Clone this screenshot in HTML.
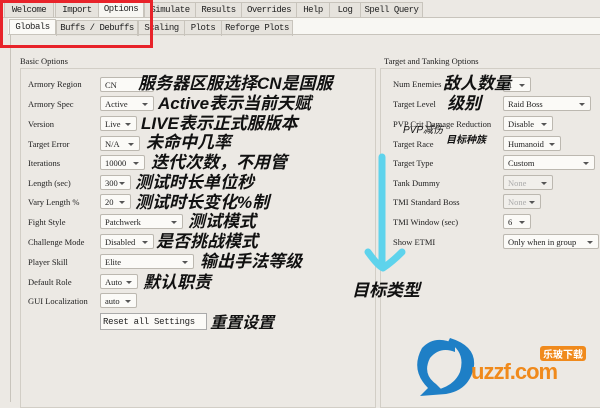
<!DOCTYPE html><html><head><style>
body{margin:0;width:600px;height:402px;background:#ece9e4;position:relative;overflow:hidden;font-family:"Liberation Serif","Noto Serif CJK SC",serif;font-size:9px;color:#222}
.a{position:absolute}
.tab{position:absolute;height:15px;border:1px solid #c8c4bc;border-bottom:none;background:#e6e3dd;font-size:9px;line-height:15px;text-align:center;color:#222;font-family:"Liberation Mono",monospace;letter-spacing:-0.5px}
.lbl{position:absolute;font-size:8.5px;color:#222}
.cb{position:absolute;height:15px;border:1px solid #bcb8b0;background:#fbfaf7;border-radius:2px;font-size:8.5px;line-height:15px;padding-left:4px;box-sizing:border-box;white-space:nowrap}
.cb:after{content:"";position:absolute;right:5px;top:6px;border:3px solid transparent;border-top:3px solid #555}
.dis{color:#aaa;background:#f1efeb}
.cn{position:absolute;font-family:"Liberation Sans","Noto Sans CJK SC",sans-serif;font-weight:bold;font-style:italic;color:#111;font-size:16px;white-space:nowrap;line-height:1}
</style></head><body>
<div class="tab" style="left:4px;top:2px;width:48px">Welcome</div>
<div class="tab" style="left:55px;top:2px;width:42px">Import</div>
<div class="tab" style="left:98px;top:1px;width:44px;background:#f7f6f2;height:16px">Options</div>
<div class="tab" style="left:144px;top:2px;width:50px">Simulate</div>
<div class="tab" style="left:195px;top:2px;width:45px">Results</div>
<div class="tab" style="left:241px;top:2px;width:54px">Overrides</div>
<div class="tab" style="left:296px;top:2px;width:32px">Help</div>
<div class="tab" style="left:329px;top:2px;width:30px">Log</div>
<div class="tab" style="left:360px;top:2px;width:61px">Spell Query</div>
<div class="a" style="left:0;top:17px;width:600px;height:1px;background:#c8c4bc"></div>
<div class="a" style="left:8px;top:18px;width:592px;height:16px;background:#f8f7f3"></div>
<div class="tab" style="left:9px;top:19px;width:45px;background:#fbfaf7">Globals</div>
<div class="tab" style="left:56px;top:20px;width:80px">Buffs / Debuffs</div>
<div class="tab" style="left:138px;top:20px;width:45px">Scaling</div>
<div class="tab" style="left:184px;top:20px;width:36px">Plots</div>
<div class="tab" style="left:221px;top:20px;width:70px">Reforge Plots</div>
<div class="a" style="left:8px;top:34px;width:592px;height:1px;background:#c8c4bc"></div>
<div class="a" style="left:10px;top:35px;width:1px;height:367px;background:#c8c4bc"></div>
<div class="a" style="left:0;top:0;width:147px;height:42px;border:3px solid #e8232a"></div>
<div class="lbl" style="left:20px;top:56px">Basic Options</div>
<div class="lbl" style="left:384px;top:56px">Target and Tanking Options</div>
<div class="a" style="left:20px;top:68px;width:356px;height:340px;border:1px solid #d2cec6;box-sizing:border-box"></div>
<div class="a" style="left:380px;top:68px;width:230px;height:340px;border:1px solid #d2cec6;box-sizing:border-box"></div>

<div class="lbl" style="left:28px;top:79px">Armory Region</div><div class="cb" style="left:100px;top:77px;width:54px">CN</div>
<div class="lbl" style="left:28px;top:99px">Armory Spec</div><div class="cb" style="left:100px;top:96px;width:54px">Active</div>
<div class="lbl" style="left:28px;top:119px">Version</div><div class="cb" style="left:100px;top:116px;width:37px">Live</div>
<div class="lbl" style="left:28px;top:139px">Target Error</div><div class="cb" style="left:100px;top:136px;width:40px">N/A</div>
<div class="lbl" style="left:28px;top:158px">Iterations</div><div class="cb" style="left:100px;top:155px;width:45px">10000</div>
<div class="lbl" style="left:28px;top:178px">Length (sec)</div><div class="cb" style="left:100px;top:175px;width:31px">300</div>
<div class="lbl" style="left:28px;top:197px">Vary Length %</div><div class="cb" style="left:100px;top:194px;width:31px">20</div>
<div class="lbl" style="left:28px;top:217px">Fight Style</div><div class="cb" style="left:100px;top:214px;width:83px">Patchwerk</div>
<div class="lbl" style="left:28px;top:237px">Challenge Mode</div><div class="cb" style="left:100px;top:234px;width:54px">Disabled</div>
<div class="lbl" style="left:28px;top:257px">Player Skill</div><div class="cb" style="left:100px;top:254px;width:94px">Elite</div>
<div class="lbl" style="left:28px;top:277px">Default Role</div><div class="cb" style="left:100px;top:274px;width:38px">Auto</div>
<div class="lbl" style="left:28px;top:296px">GUI Localization</div><div class="cb" style="left:100px;top:293px;width:37px">auto</div>
<div class="a" style="left:100px;top:313px;width:107px;height:17px;border:1px solid #aaa;background:#fbfaf7;font-family:'Liberation Mono',monospace;font-size:9px;line-height:17px;padding-left:2px;box-sizing:border-box;white-space:nowrap;overflow:hidden;letter-spacing:-0.3px">Reset all Settings</div>

<div class="lbl" style="left:393px;top:79px">Num Enemies</div><div class="cb" style="left:503px;top:77px;width:28px">1</div>
<div class="lbl" style="left:393px;top:99px">Target Level</div><div class="cb" style="left:503px;top:96px;width:88px">Raid Boss</div>
<div class="lbl" style="left:393px;top:119px">PVP Crit Damage Reduction</div><div class="cb" style="left:503px;top:116px;width:50px">Disable</div>
<div class="lbl" style="left:393px;top:139px">Target Race</div><div class="cb" style="left:503px;top:136px;width:58px">Humanoid</div>
<div class="lbl" style="left:393px;top:158px">Target Type</div><div class="cb" style="left:503px;top:155px;width:92px">Custom</div>
<div class="lbl" style="left:393px;top:178px">Tank Dummy</div><div class="cb dis" style="left:503px;top:175px;width:50px">None</div>
<div class="lbl" style="left:393px;top:197px">TMI Standard Boss</div><div class="cb dis" style="left:503px;top:194px;width:38px">None</div>
<div class="lbl" style="left:393px;top:217px">TMI Window (sec)</div><div class="cb" style="left:503px;top:214px;width:28px">6</div>
<div class="lbl" style="left:393px;top:237px">Show ETMI</div><div class="cb" style="left:503px;top:234px;width:96px">Only when in group</div>

<div class="cn" style="left:138px;top:75px;font-size:17px">服务器区服选择CN是国服</div>
<div class="cn" style="left:158px;top:95px;font-size:17px">Active表示当前天赋</div>
<div class="cn" style="left:141px;top:115px;font-size:17px">LIVE表示正式服版本</div>
<div class="cn" style="left:146px;top:134px;font-size:17px">未命中几率</div>
<div class="cn" style="left:151px;top:154px;font-size:17px">迭代次数，不用管</div>
<div class="cn" style="left:135px;top:174px;font-size:17px">测试时长单位秒</div>
<div class="cn" style="left:135px;top:194px;font-size:17px">测试时长变化%制</div>
<div class="cn" style="left:188px;top:213px;font-size:17px">测试模式</div>
<div class="cn" style="left:156px;top:233px;font-size:17px">是否挑战模式</div>
<div class="cn" style="left:200px;top:253px;font-size:17px">输出手法等级</div>
<div class="cn" style="left:143px;top:274px;font-size:17px">默认职责</div>
<div class="cn" style="left:210px;top:316px;font-size:16px">重置设置</div>
<div class="cn" style="left:443px;top:75px;font-size:17px">敌人数量</div>
<div class="cn" style="left:447px;top:95px;font-size:17px">级别</div>
<div class="cn" style="left:403px;top:126px;font-size:10px;font-weight:normal">PVP减伤</div>
<div class="cn" style="left:446px;top:136px;font-size:10px">目标种族</div>
<div class="cn" style="left:352px;top:282px;font-size:17px">目标类型</div>

<svg class="a" style="left:0;top:0" width="600" height="402"><path d="M382 157 L382 266 M368 252 Q378 266 383 268 Q392 262 402 252" stroke="#5ed3ec" stroke-width="7" fill="none" stroke-linecap="round" stroke-linejoin="round"/>
<path d="M455 344 Q435 334 422 348 Q410 370 428 388 L420 396 L446 394 L436 384 Q422 374 430 358 Q440 346 455 352Z" fill="#1e7fc6"/>
<path d="M448 342 Q466 352 460 372 Q454 386 436 390 L446 394 Q470 390 474 366 Q476 346 450 338Z" fill="#1e7fc6"/>
</svg>
<div class="a" style="left:471px;top:359px;font-family:'Liberation Sans',sans-serif;font-weight:bold;font-size:22px;color:#f08a1c;letter-spacing:-1px">uzzf.com</div>
<div class="a" style="left:540px;top:346px;background:#f08a1c;color:#fff;font-family:'Noto Sans CJK SC',sans-serif;font-weight:bold;font-size:10px;padding:0 3px;border-radius:3px">乐玻下载</div>
</body></html>
